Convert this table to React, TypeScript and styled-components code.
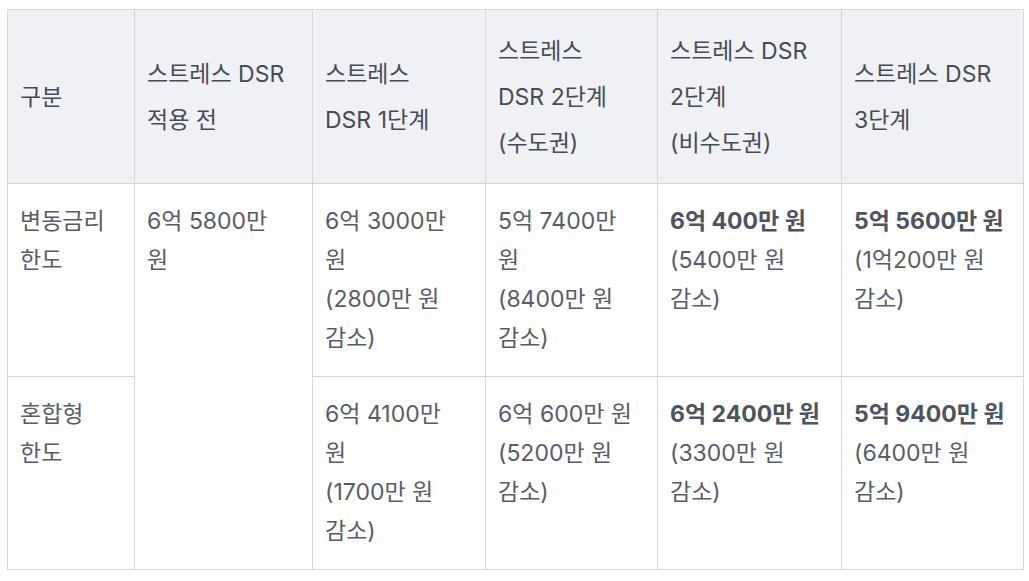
import React from "react";
import styled, { createGlobalStyle } from "styled-components";

const GlobalStyle = createGlobalStyle`
  body {
    margin: 0;
    background: #ffffff;
    font-family: "Inter", "Noto Sans CJK KR", sans-serif;
  }
`;

const Page = styled.div`
  padding: 9px 6px 0 7px;
`;

const Table = styled.table`
  width: 1016px;
  border-collapse: collapse;
  table-layout: fixed;
  font-size: 23px;
`;

const HeadCell = styled.th`
  background: #f0f1f5;
  border: 1px solid #d3d7de;
  padding: 17px 12px;
  text-align: left;
  vertical-align: middle;
  font-weight: 400;
  color: #464c57;
  line-height: 46px;
  height: 139px;
  white-space: nowrap;
`;

const Cell = styled.td`
  border: 1px solid #d3d7de;
  padding: 18px 12px;
  vertical-align: top;
  color: #575d68;
  line-height: 39px;
  height: 156px;
  white-space: nowrap;
`;

const Strong = styled.strong`
  font-weight: 700;
  color: #4d5461;
`;

const widths = [127, 178, 173, 172, 184, 182];

const App: React.FC = () => {
  return (
    <>
      <GlobalStyle />
      <Page>
        <Table>
          <colgroup>
            {widths.map((w, i) => (
              <col key={i} style={{ width: w }} />
            ))}
          </colgroup>
          <thead>
            <tr>
              <HeadCell>구분</HeadCell>
              <HeadCell>
                스트레스 DSR
                <br />
                적용 전
              </HeadCell>
              <HeadCell>
                스트레스
                <br />
                DSR 1단계
              </HeadCell>
              <HeadCell>
                스트레스
                <br />
                DSR 2단계
                <br />
                (수도권)
              </HeadCell>
              <HeadCell>
                스트레스 DSR
                <br />
                2단계
                <br />
                (비수도권)
              </HeadCell>
              <HeadCell>
                스트레스 DSR
                <br />
                3단계
              </HeadCell>
            </tr>
          </thead>
          <tbody>
            <tr>
              <Cell>
                변동금리
                <br />
                한도
              </Cell>
              <Cell rowSpan={2}>
                6억 5800만
                <br />원
              </Cell>
              <Cell>
                6억 3000만
                <br />원<br />
                (2800만 원
                <br />
                감소)
              </Cell>
              <Cell>
                5억 7400만
                <br />원<br />
                (8400만 원
                <br />
                감소)
              </Cell>
              <Cell>
                <Strong>6억 400만 원</Strong>
                <br />
                (5400만 원
                <br />
                감소)
              </Cell>
              <Cell>
                <Strong>5억 5600만 원</Strong>
                <br />
                (1억200만 원
                <br />
                감소)
              </Cell>
            </tr>
            <tr>
              <Cell>
                혼합형
                <br />
                한도
              </Cell>
              <Cell>
                6억 4100만
                <br />원<br />
                (1700만 원
                <br />
                감소)
              </Cell>
              <Cell>
                6억 600만 원
                <br />
                (5200만 원
                <br />
                감소)
              </Cell>
              <Cell>
                <Strong>6억 2400만 원</Strong>
                <br />
                (3300만 원
                <br />
                감소)
              </Cell>
              <Cell>
                <Strong>5억 9400만 원</Strong>
                <br />
                (6400만 원
                <br />
                감소)
              </Cell>
            </tr>
          </tbody>
        </Table>
      </Page>
    </>
  );
};

export default App;
